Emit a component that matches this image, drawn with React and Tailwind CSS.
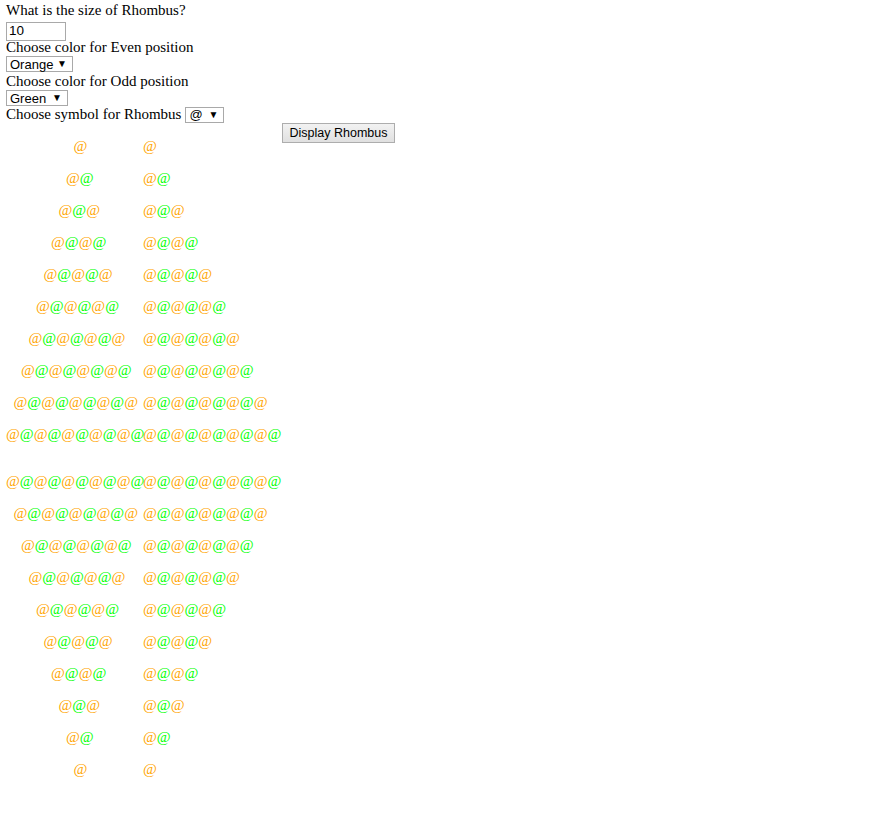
import React from "react";

const SIZE = 10;
const EVEN = "#ffa500";
const ODD = "#00ff00";

function Symbols({ count }) {
  return (
    <>
      {Array.from({ length: count }).map((_, i) => (
        <span key={i} style={{ color: i % 2 === 0 ? EVEN : ODD }}>
          @
        </span>
      ))}
    </>
  );
}

function Row({ count }) {
  return (
    <div className="h-[32px] flex items-end whitespace-nowrap">
      <div className="w-[137px] leading-[17px]">
        {"\u00a0".repeat((SIZE - count) * 2)}
        <Symbols count={count} />
      </div>
      <div className="flex-1 leading-[17px]">
        <Symbols count={count} />
      </div>
    </div>
  );
}

function FakeSelect({ label, width }) {
  return (
    <div
      className={`${width} h-[16px] border border-[#a9a9a9] bg-white flex items-center justify-between pl-[3px] pr-[5px] text-[13px] leading-none text-black`}
      style={{ fontFamily: '"Liberation Sans", Arial, sans-serif' }}
    >
      <span>{label}</span>
      <span className="text-[10px]">▼</span>
    </div>
  );
}

export default function App() {
  const up = Array.from({ length: SIZE }, (_, i) => i + 1);
  const down = [...up].reverse();

  return (
    <div
      className="pt-[1px] pl-[6px] text-[15px] text-black bg-white min-h-[835px]"
      style={{ fontFamily: '"Liberation Serif", "Times New Roman", serif' }}
    >
      {/* size */}
      <p className="leading-[18px]">What is the size of Rhombus?</p>
      <div className="h-[19px]">
        <input
          type="text"
          defaultValue="10"
          className="w-[60px] h-[19px] border border-[#a9a9a9] px-[2px] text-[13.5px] outline-none"
          style={{ fontFamily: '"Liberation Sans", Arial, sans-serif' }}
        />
      </div>

      {/* colours */}
      <p className="leading-[18px]">Choose color for Even position</p>
      <div className="h-[16px]">
        <FakeSelect label="Orange" width="w-[67px]" />
      </div>
      <p className="leading-[18px]">Choose color for Odd position</p>
      <div className="h-[16px]">
        <FakeSelect label="Green" width="w-[62px]" />
      </div>

      {/* symbol */}
      <div className="h-[17px] flex items-center gap-[4px] leading-[17px]">
        <span>Choose symbol for Rhombus</span>
        <FakeSelect label="@" width="w-[39px]" />
      </div>

      <div className="flex items-start">
        <div className="w-[276px]">
          {up.map((n) => (
            <Row key={"u" + n} count={n} />
          ))}
          <div className="mt-[15px]">
            {down.map((n) => (
              <Row key={"d" + n} count={n} />
            ))}
          </div>
        </div>
        <button
          className="w-[113px] h-[20px] border border-[#adadad] bg-gradient-to-b from-[#f2f2f2] to-[#e0e0e0] text-[12.5px] text-black leading-none"
          style={{ fontFamily: '"Liberation Sans", Arial, sans-serif' }}
        >
          Display Rhombus
        </button>
      </div>
    </div>
  );
}
